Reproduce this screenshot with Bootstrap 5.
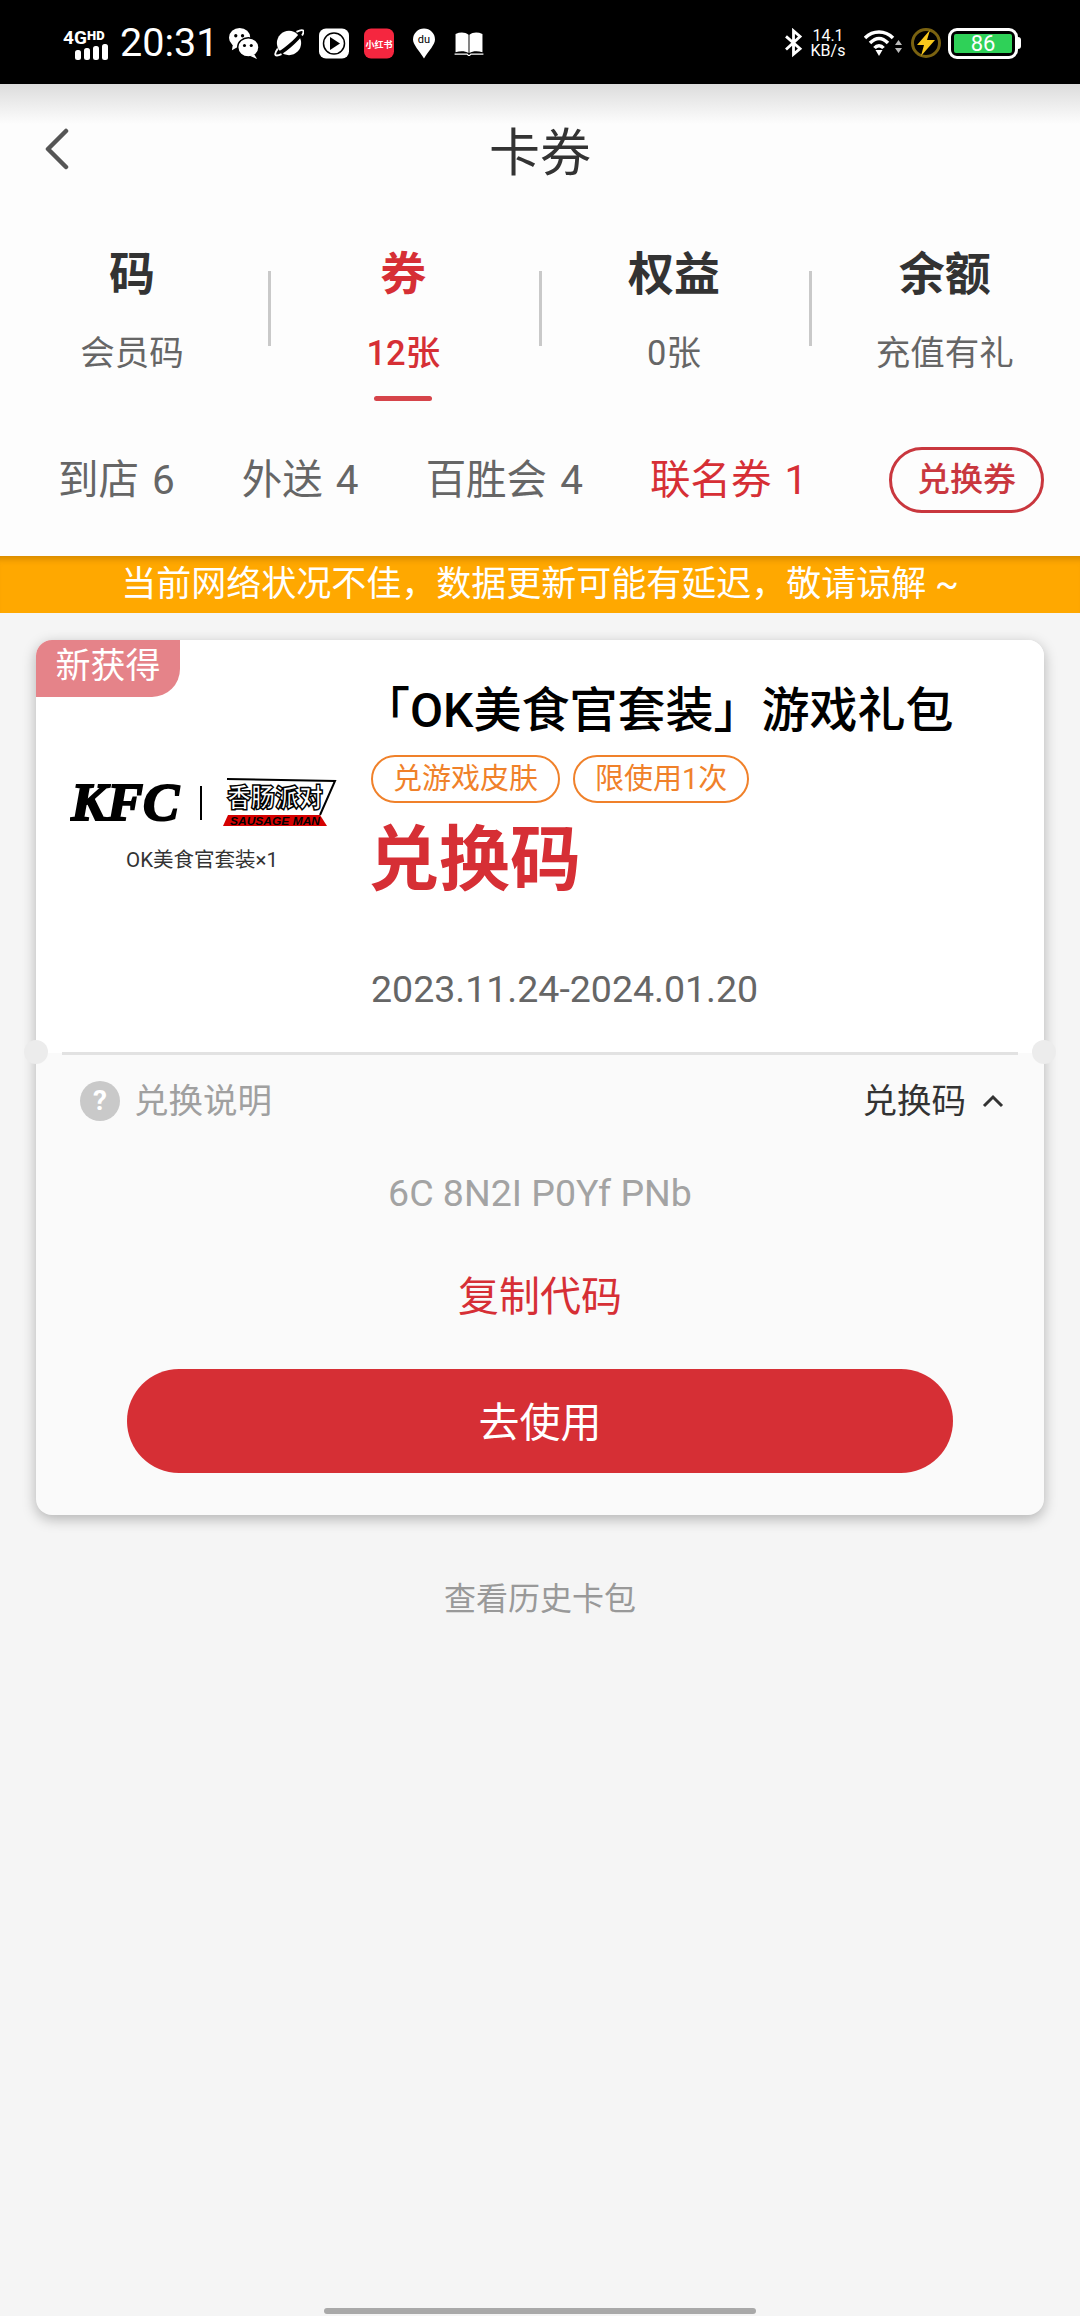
<!DOCTYPE html>
<html lang="zh-CN">
<head>
  <meta charset="UTF-8" />
  <meta name="viewport" content="width=device-width, initial-scale=1" />
  <title>卡券</title>
  <link href="https://cdn.jsdelivr.net/npm/bootstrap@5.3.0/dist/css/bootstrap.min.css" rel="stylesheet" />
  <style>
    html, body {
      width: 1080px;
      height: 2316px;
      margin: 0;
      overflow: hidden;
    }

    body {
      background: #f5f5f5;
      font-family: "Roboto", "Noto Sans CJK SC", sans-serif;
      color: #333;
    }

    .page {
      height: 2316px;
      position: relative;
    }

    /* status bar */
    .status-bar {
      height: 84px;
      background: #000;
      color: #fff;
      padding: 2px 59px 0 63px;
    }

    .status-bar svg { flex: none; }

    .net-type { margin-right: 10px; }

    .clock {
      font-size: 39.500px;
      line-height: 1;
      width: 92px;
      margin-right: 17px;
      white-space: nowrap;
    }

    .notify-icons { gap: 15px; }

    .speed {
      font-size: 16px;
      line-height: 15px;
      text-align: center;
      width: 36px;
      margin: 0 18px 0 7px;
    }

    .batt {
      width: 70px;
      height: 31px;
      border: 3px solid #fff;
      border-radius: 9px;
      padding: 3px;
      margin-left: 6px;
    }

    .batt-fill {
      background: #2fd158;
      border-radius: 2px;
      height: 100%;
      font-size: 22px;
      line-height: 19px;
      text-align: center;
    }

    .batt-tip {
      width: 3px;
      height: 12px;
      background: #fff;
      border-radius: 0 3px 3px 0;
    }

    /* header */
    .top-panel {
      height: 472px;
      background: linear-gradient(#dcdcdc, #fdfdfd 40px);
    }

    .title-row {
      height: 132px;
      position: relative;
      padding-top: 8px;
    }

    .title-row h1 {
      font-size: 51px;
      font-weight: 400;
      margin: 0;
      color: #333;
    }

    .back-btn {
      position: absolute;
      left: 43px;
      top: 44px;
    }

    .kind-tabs {
      height: 134px;
      padding-top: 28px;
    }

    .kind-tab {
      flex: 1 1 0;
      text-align: center;
      position: relative;
    }

    .kind-tab:first-child {
      flex: 0 0 268px;
      padding-right: 4px;
    }

    .kind-tab + .kind-tab::before {
      content: "";
      position: absolute;
      left: 0;
      top: 27px;
      height: 75px;
      width: 3px;
      background: #c9c9c9;
    }

    .kind-name {
      font-size: 46px;
      font-weight: 700;
      line-height: 60px;
      color: #333;
    }

    .kind-sub {
      font-size: 34.500px;
      line-height: 48px;
      margin-top: 25px;
      color: #666;
    }

    .kind-tab.on .kind-name { color: #d62f35; }
    .kind-tab.on .kind-sub { color: #d62f35; font-weight: 500; }

    .kind-tab.on::after {
      content: "";
      position: absolute;
      left: 50%;
      margin-left: -29px;
      top: 152px;
      width: 58px;
      height: 5px;
      background: #d6444a;
      border-radius: 3px;
    }

    .filter-row {
      padding: 0 36px 0 58px;
      height: 110px;
      margin-top: 75px;
    }

    .filter-item {
      font-size: 40.500px;
      color: #666;
      margin-right: 67px;
      word-spacing: 3px;
      white-space: nowrap;
    }

    .filter-item.on { color: #d62f35; }

    .swap-pill {
      font-size: 33px;
      color: #c9373e;
      font-weight: 500;
      border: 3px solid #c9373e;
      border-radius: 33px;
      height: 66px;
      width: 155px;
      padding: 0;
      background: transparent;
    }

    .net-notice {
      height: 57px;
      background: #ffa800;
      color: #fff;
      font-size: 35px;
      line-height: 1;
      box-shadow: inset 0 8px 6px -5px rgba(150, 90, 0, .4);
    }

    /* coupon card */
    .coupon {
      margin: 27px 36px 0;
      height: 875px;
      background: #fafafa;
      border: 0;
      border-radius: 16px;
      box-shadow: 0 4px 14px rgba(0, 0, 0, .28);
      position: relative;
    }

    .coupon-top {
      background: #fff;
      height: 413px;
      border-radius: 16px 16px 0 0;
      position: relative;
    }

    .new-tag {
      position: absolute;
      left: 0;
      top: 0;
      width: 144px;
      height: 57px;
      background: #e58389;
      color: #fff;
      font-size: 35px;
      line-height: 54px;
      text-align: center;
      border-radius: 16px 0 28px 0;
    }

    .brand-col {
      width: 335px;
      padding: 132px 0 0 34px;
      flex: none;
    }

    .brand-logo { display: block; }

    .brand-cap {
      font-size: 20.500px;
      line-height: 24px;
      color: #333;
      text-align: center;
      margin-top: 16px;
      margin-left: 7px;
      width: 250px;
    }

    .info-col { padding-top: 40px; }

    .coupon-name {
      font-size: 48px;
      font-weight: 500;
      line-height: 62px;
      color: #000;
      margin: 0 0 0 -9px;
      white-space: nowrap;
    }

    .tag-row {
      gap: 13px;
      margin-top: 13px;
    }

    .coupon-tag {
      font-size: 29px;
      line-height: 1;
      color: #f0812a;
      border: 2px solid #f0812a;
      border-radius: 24px;
      height: 48px;
      padding: 0 20px;
    }

    .coupon-kind {
      font-size: 71px;
      font-weight: 700;
      line-height: 84px;
      color: #d62f35;
      margin: 15px 0 0 -3px;
    }

    .coupon-date {
      font-size: 37.500px;
      line-height: 40px;
      color: #666;
      margin-top: 67px;
    }

    .rule-line {
      position: absolute;
      left: 26px;
      right: 26px;
      top: 412px;
      height: 3px;
      background: #e2e2e2;
    }

    .notch {
      position: absolute;
      top: 400px;
      width: 24px;
      height: 24px;
      border-radius: 50%;
      background: #ececec;
    }

    .notch-l { left: -12px; }
    .notch-r { right: -12px; }

    .rule-row {
      padding: 26px 40px 0 44px;
      font-size: 34.500px;
      line-height: 44px;
    }

    .rule-help { color: #a0a0a0; }

    .help-dot {
      width: 40px;
      height: 40px;
      border-radius: 50%;
      background: #c9c9c9;
      color: #fff;
      font-size: 28px;
      font-weight: 700;
      line-height: 40px;
      text-align: center;
      margin-right: 14px;
    }

    .code-text {
      font-size: 37.500px;
      line-height: 40px;
      color: #a3a3a3;
      text-align: center;
      margin-top: 50px;
    }

    .copy-link {
      font-size: 41px;
      line-height: 50px;
      color: #d62f35;
      text-align: center;
      margin-top: 59px;
    }

    .use-btn {
      display: block;
      width: 826px;
      height: 104px;
      margin: 47px auto 0;
      padding: 6px 0 0;
      border: 0;
      border-radius: 52px;
      background: #d62f35;
      color: #fff;
      font-size: 41px;
    }

    .history-link {
      font-size: 32px;
      color: #999;
      text-align: center;
      margin-top: 60px;
    }

    .home-bar {
      position: absolute;
      left: 324px;
      bottom: 2px;
      width: 432px;
      height: 6px;
      background: #a9a9a9;
      border-radius: 3px;
    }
  </style>
</head>
<body>
  <div class="page">

    <!-- Status bar -->
    <div class="status-bar d-flex align-items-center">
      <svg class="net-type" width="47" height="36" viewBox="0 -4 47 36">
        <text x="0" y="15" fill="#fff" font-family="Roboto" font-weight="700" font-size="19">4G</text>
        <text x="24" y="11" fill="#fff" font-family="Roboto" font-weight="900" font-size="13">HD</text>
        <rect x="12" y="21" width="6" height="10" rx="2.500" fill="#fff"/>
        <rect x="21" y="19" width="6" height="12" rx="2.500" fill="#fff"/>
        <rect x="30" y="17" width="6" height="14" rx="2.500" fill="#fff"/>
        <rect x="39" y="15" width="6" height="16" rx="2.500" fill="#fff"/>
      </svg>
      <span class="clock">20:31</span>
      <div class="notify-icons d-flex align-items-center flex-grow-1">
        <svg width="30" height="31" viewBox="0 0 31 32">
          <ellipse cx="11" cy="10" rx="11" ry="10" fill="#fff"/>
          <path d="M4 17l-1 6 7-4z" fill="#fff"/>
          <circle cx="7" cy="8" r="1.700"/><circle cx="14" cy="8" r="1.700"/>
          <ellipse cx="20" cy="20" rx="11" ry="10" fill="#fff" stroke="#000" stroke-width="1.500"/>
          <path d="M26 27l3 5-7-3z" fill="#fff"/>
          <circle cx="16" cy="18" r="1.600"/><circle cx="23" cy="18" r="1.600"/>
        </svg>
        <svg width="30" height="28" viewBox="0 0 32 30">
          <circle cx="16" cy="15" r="13" fill="#fff"/>
          <path d="M3 27C8 26 24 13 30 4" stroke="#000" stroke-width="4" fill="none"/>
          <path d="M4 21C-1 28 1 30 8 27M24 3C32 -1 33 2 30 7" stroke="#fff" stroke-width="2" fill="none"/>
        </svg>
        <svg width="30" height="31" viewBox="0 0 30 30">
          <rect width="30" height="30" rx="7" fill="#fff"/>
          <circle cx="15" cy="15" r="10.500" fill="none" stroke="#000" stroke-width="1.500"/>
          <path d="M11 8.500l10 6.500-10 6.500z"/>
        </svg>
        <svg width="30" height="31" viewBox="0 0 30 30">
          <rect width="30" height="30" rx="7" fill="#f5263f"/>
          <text x="15" y="19" text-anchor="middle" fill="#fff" font-size="9" font-weight="700" font-family="Noto Sans CJK SC">小红书</text>
        </svg>
        <svg class="ms-1" width="22" height="31" viewBox="0 0 22 30">
          <path d="M11 0a11 11 0 0 1 11 11c0 5-6 11-11 19C6 22 0 16 0 11A11 11 0 0 1 11 0z" fill="#fff"/>
          <text x="11" y="14" text-anchor="middle" font-size="11" font-family="Roboto">du</text>
        </svg>
        <svg class="ms-1" width="30" height="25" viewBox="0 0 30 26">
          <path d="M1 3C6 1 11 1 14.500 4V23C11 20.500 6 20.500 1 22zM29 3C24 1 19 1 15.500 4V23C19 20.500 24 20.500 29 22z" fill="#fff"/>
          <path d="M0 24H13L15 26L17 24H30" stroke="#fff" stroke-width="1.200" fill="none"/>
        </svg>
      </div>
      <svg width="19" height="30" viewBox="0 0 20 32">
        <path d="M2 9L17 22L10 28V3L17 9L2 23" fill="none" stroke="#fff" stroke-width="3"/>
      </svg>
      <div class="speed">14.1<br />KB/s</div>
      <svg width="38" height="28" viewBox="0 0 38 28">
        <path d="M1 9C9 1 21 1 29 9" stroke="#fff" stroke-width="3.500" fill="none"/>
        <path d="M6 14C12 8 18 8 24 14" stroke="#fff" stroke-width="3.500" fill="none"/>
        <path d="M10.500 19C13 16 17 16 19.500 19" stroke="#fff" stroke-width="3.500" fill="none"/>
        <path d="M11.500 21H18.500L15 27z" fill="#fff"/>
        <path d="M31 16h7l-3.500-5zM31 19h7l-3.500 5z" fill="#bbb"/>
      </svg>
      <svg class="ms-2" width="32" height="32" viewBox="0 0 32 32">
        <circle cx="16" cy="16" r="13.500" fill="none" stroke="#7a6210" stroke-width="3"/>
        <path d="M20 3L7 18h7l-3 11 14-16h-8z" fill="#f8c81c"/>
      </svg>
      <div class="batt"><div class="batt-fill">86</div></div>
      <div class="batt-tip"></div>
    </div>

    <!-- Header -->
    <div class="top-panel">
      <div class="title-row d-flex align-items-center justify-content-center">
        <svg class="back-btn" width="26" height="42" viewBox="0 0 26 42">
          <path d="M23 3L5 21l18 18" fill="none" stroke="#555" stroke-width="4.500" stroke-linecap="round" stroke-linejoin="round"/>
        </svg>
        <h1>卡券</h1>
      </div>

      <div class="kind-tabs d-flex">
        <div class="kind-tab"><div class="kind-name">码</div><div class="kind-sub">会员码</div></div>
        <div class="kind-tab on"><div class="kind-name">券</div><div class="kind-sub">12张</div></div>
        <div class="kind-tab"><div class="kind-name">权益</div><div class="kind-sub">0张</div></div>
        <div class="kind-tab"><div class="kind-name">余额</div><div class="kind-sub">充值有礼</div></div>
      </div>

      <div class="filter-row d-flex align-items-center">
        <span class="filter-item">到店 6</span>
        <span class="filter-item">外送 4</span>
        <span class="filter-item">百胜会 4</span>
        <span class="filter-item on">联名券 1</span>
        <button class="swap-pill ms-auto" type="button">兑换券</button>
      </div>
    </div>

    <div class="net-notice d-flex align-items-center justify-content-center">当前网络状况不佳，数据更新可能有延迟，敬请谅解 ~</div>

    <!-- Coupon -->
    <div class="card coupon">
      <div class="coupon-top d-flex">
        <div class="new-tag">新获得</div>
        <div class="brand-col">
          <svg class="brand-logo" width="270" height="60" viewBox="0 -6 270 60">
            <text x="1" y="42" font-family="Liberation Serif" font-weight="700" font-style="italic" font-size="52" textLength="108" lengthAdjust="spacingAndGlyphs" stroke="#000" stroke-width="2">KFC</text>
            <rect x="130" y="8" width="2" height="34"/>
            <path d="M157 1L265 3L250 37" fill="none" stroke="#000" stroke-width="2"/>
            <text x="205" y="29" text-anchor="middle" font-family="Noto Sans CJK SC" font-weight="900" font-size="26" fill="#fff" stroke="#000" stroke-width="1.500" textLength="96" lengthAdjust="spacingAndGlyphs">香肠派对</text>
            <path d="M158 37H250L257 48H153z" fill="#d50000"/>
            <text x="205" y="47" text-anchor="middle" font-family="Liberation Sans" font-weight="700" font-style="italic" font-size="11" textLength="90" lengthAdjust="spacingAndGlyphs">SAUSAGE MAN</text>
          </svg>
          <div class="brand-cap">OK美食官套装×1</div>
        </div>
        <div class="info-col">
          <h2 class="coupon-name">「OK美食官套装」游戏礼包</h2>
          <div class="tag-row d-flex">
            <span class="coupon-tag d-flex align-items-center">兑游戏皮肤</span>
            <span class="coupon-tag d-flex align-items-center">限使用1次</span>
          </div>
          <div class="coupon-kind">兑换码</div>
          <div class="coupon-date">2023.11.24-2024.01.20</div>
        </div>
      </div>
      <div class="rule-line"></div>
      <div class="notch notch-l"></div>
      <div class="notch notch-r"></div>

      <div class="rule-row d-flex align-items-center justify-content-between">
        <div class="rule-help d-flex align-items-center"><span class="help-dot">?</span>兑换说明</div>
        <div class="d-flex align-items-center">兑换码
          <svg class="ms-3" width="22" height="14" viewBox="0 0 22 14">
            <path d="M2 12l9-9 9 9" fill="none" stroke="#333" stroke-width="3"/>
          </svg>
        </div>
      </div>
      <div class="code-text">6C 8N2I P0Yf PNb</div>
      <div class="copy-link">复制代码</div>
      <button class="use-btn" type="button">去使用</button>
    </div>

    <div class="history-link">查看历史卡包</div>
    <div class="home-bar"></div>
  </div>

  <script src="https://cdn.jsdelivr.net/npm/bootstrap@5.3.0/dist/js/bootstrap.bundle.min.js"></script>
</body>
</html>
